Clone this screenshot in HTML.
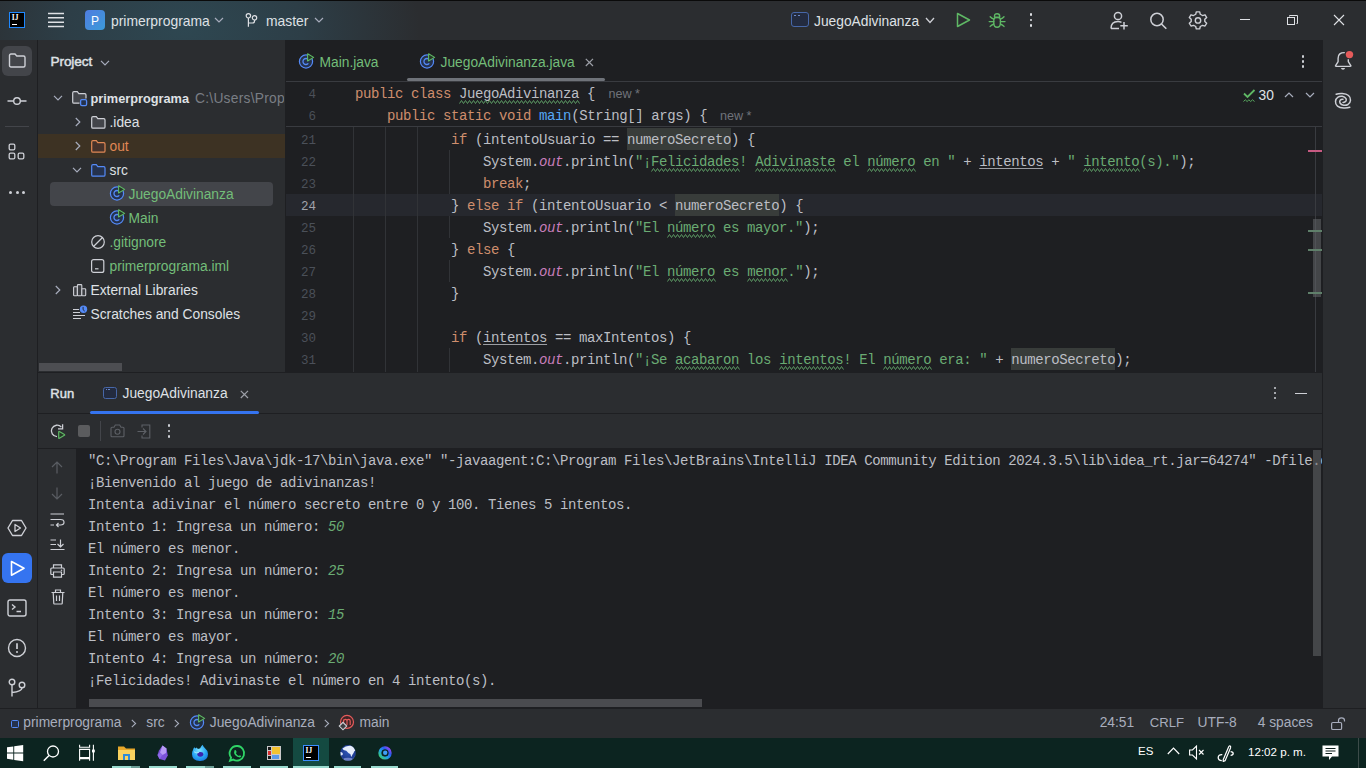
<!DOCTYPE html>
<html><head><meta charset="utf-8">
<style>
*{box-sizing:border-box}
html,body{margin:0;padding:0}
body{width:1366px;height:768px;overflow:hidden;position:relative;background:#2B2D30;font-family:"Liberation Sans",sans-serif;color:#DFE1E5;font-size:14px}
.a{position:absolute}
.t{position:absolute;white-space:pre;line-height:1}
.mono{font-family:"Liberation Mono",monospace}
svg{position:absolute;overflow:visible}
#title{left:0;top:0;width:1366px;height:40px;background:#2B2D30;border-top:1px solid #0a0a0a}
#grad{left:0;top:1px;width:700px;height:39px;background:radial-gradient(ellipse 235px 150px at 185px 28px,#2E4751 0%,#2D3E47 50%,#2B2D30 100%)}
#stripeL{left:0;top:40px;width:38px;height:668px;background:#2B2D30;border-right:1px solid #1E1F22}
#proj{left:38px;top:40px;width:247px;height:332px;background:#2B2D30}
#editor{left:285px;top:40px;width:1038px;height:332px;background:#1E1F22;border-left:1px solid #1E1F22}
#stripeR{left:1322px;top:40px;width:44px;height:668px;background:#2B2D30;border-left:1px solid #1E1F22}
#run{left:38px;top:372px;width:1284px;height:336px;background:#2B2D30;border-top:1px solid #1E1F22}
#status{left:0;top:708px;width:1366px;height:30px;background:#2B2D30;border-top:1px solid #1E1F22}
#taskbar{left:0;top:738px;width:1366px;height:30px;background:#0C2420}

.code{position:absolute;left:355px;height:22px;line-height:22px;padding-top:0.5px;font-family:"Liberation Mono",monospace;font-size:14px;letter-spacing:-0.4px;color:#BCBEC4;white-space:pre}
.ln{position:absolute;left:287px;width:29px;text-align:right;height:22px;line-height:22px;padding-top:1.5px;font-family:"Liberation Mono",monospace;font-size:12.5px;color:#4B5059;white-space:pre}
.ln.cur{color:#A1A3AB}
.k{color:#CF8E6D}.s{color:#6AAB73}.fn{color:#56A8F5}.st{color:#C77DBB;font-style:italic}
.sty{color:#6AAB73}
.ty{}
.ul{text-decoration:underline #9C9EA3;text-underline-offset:2px}
.hl{}
.inp{color:#6AAB73;font-style:italic}
</style></head><body>
<div class="a" id="title"></div>
<div class="a" id="grad"></div>

<!-- TITLE BAR CONTENT -->
<div class="a" style="left:9px;top:12px;width:16px;height:16px;background:#000;border:1px solid #1E88FF"></div>
<div class="t" style="left:11.8px;top:14.3px;font-size:7.5px;font-weight:bold;color:#fff;font-family:'Liberation Serif'">IJ</div>
<div class="a" style="left:12px;top:24px;width:5px;height:1px;background:#fff"></div>
<svg style="left:48px;top:12px" width="16" height="16"><path d="M0 1.5 H16 M0 5.8 H16 M0 10.2 H16 M0 14.6 H16" stroke="#DFE1E5" stroke-width="1.5"/></svg>
<div class="a" style="left:85px;top:10px;width:20px;height:20px;border-radius:4px;background:linear-gradient(135deg,#4F7CE0,#3B9BD9)"></div>
<div class="t" style="left:91px;top:15.2px;font-size:12px;color:#fff">P</div>
<div class="t" style="left:111px;top:14.5px;font-size:13.9px;color:#DFE1E5">primerprograma</div>
<svg style="left:214px;top:17px" width="10" height="6"><path d="M1 1 L5 5 L9 1" fill="none" stroke="#A8ADBD" stroke-width="1.2"/></svg>
<svg style="left:244px;top:11px" width="16" height="17"><circle cx="4.4" cy="4.8" r="2.2" fill="none" stroke="#DFE1E5" stroke-width="1.2"/><circle cx="10.5" cy="6.8" r="2.2" fill="none" stroke="#DFE1E5" stroke-width="1.2"/><path d="M4.4 7 V15.8 M10.5 9 V10 Q10.5 12 8.5 12 H4.4" fill="none" stroke="#DFE1E5" stroke-width="1.2"/></svg>
<div class="t" style="left:266px;top:14.5px;font-size:13.9px;color:#DFE1E5">master</div>
<svg style="left:314px;top:17px" width="10" height="6"><path d="M1 1 L5 5 L9 1" fill="none" stroke="#A8ADBD" stroke-width="1.2"/></svg>

<div class="a" style="left:791px;top:12px;width:18px;height:15px;border:1.3px solid #4767A8;border-radius:3px;background:#232B3F"></div>
<div class="a" style="left:794px;top:15px;width:2px;height:1.3px;background:#6A88C8"></div>
<div class="a" style="left:797.5px;top:15px;width:2px;height:1.3px;background:#6A88C8"></div>
<div class="t" style="left:814px;top:14.5px;font-size:13.8px;color:#DFE1E5">JuegoAdivinanza</div>
<svg style="left:925px;top:17px" width="10" height="7"><path d="M1 1 L5 5.5 L9 1" fill="none" stroke="#CED0D6" stroke-width="1.3"/></svg>
<svg style="left:955px;top:12px" width="16" height="16"><path d="M2.5 1.5 L14.5 8 L2.5 14.5 Z" fill="none" stroke="#5FB865" stroke-width="1.5" stroke-linejoin="round"/></svg>
<svg style="left:988px;top:12.6px" width="19" height="16"><path d="M6.5 4.3 V3.2 Q6.5 0.7 9.1 0.7 Q11.7 0.7 11.7 3.2 V4.3 Z" fill="none" stroke="#5FB865" stroke-width="1.4" stroke-linejoin="round"/><path d="M5.8 6.6 Q5.8 4.6 9.1 4.6 Q12.4 4.6 12.4 6.6 V10.2 Q12.4 14.2 9.1 14.2 Q5.8 14.2 5.8 10.2 Z" fill="none" stroke="#5FB865" stroke-width="1.35"/><path d="M2.2 3.8 Q3.5 5.3 5.8 6.2 M1.2 8.6 H5.8 M2.2 13.4 Q3.5 11.9 5.8 11 M16 3.8 Q14.7 5.3 12.4 6.2 M17 8.6 H12.4 M16 13.4 Q14.7 11.9 12.4 11" fill="none" stroke="#5FB865" stroke-width="1.4" stroke-linecap="round"/></svg>
<div class="a" style="left:1029.7px;top:13.3px;width:2.6px;height:2.6px;border-radius:50%;background:#DFE1E5"></div>
<div class="a" style="left:1029.7px;top:18.7px;width:2.6px;height:2.6px;border-radius:50%;background:#DFE1E5"></div>
<div class="a" style="left:1029.7px;top:24.2px;width:2.6px;height:2.6px;border-radius:50%;background:#DFE1E5"></div>

<svg style="left:1110px;top:11px" width="20" height="19"><circle cx="8" cy="5" r="3.6" fill="none" stroke="#CED0D6" stroke-width="1.5"/><path d="M1 17.5 Q1 10.5 8 10.5 Q10 10.5 11.5 11.3 M1 17.5 H9" fill="none" stroke="#CED0D6" stroke-width="1.5"/><path d="M14 11 V18.5 M10.3 14.7 H17.8" fill="none" stroke="#CED0D6" stroke-width="1.5"/></svg>
<svg style="left:1149px;top:12px" width="19" height="18"><circle cx="8" cy="7.5" r="6.2" fill="none" stroke="#CED0D6" stroke-width="1.5"/><path d="M12.5 12 L17.3 16.8" fill="none" stroke="#CED0D6" stroke-width="1.6"/></svg>
<svg style="left:1189px;top:11px" width="18" height="18"><path d="M7.3 1 H10.7 L11.3 3.5 L13.5 4.8 L16 4 L17.7 7 L15.8 8.8 V11.2 L17.7 13 L16 16 L13.5 15.2 L11.3 16.5 L10.7 19 H7.3 L6.7 16.5 L4.5 15.2 L2 16 L0.3 13 L2.2 11.2 V8.8 L0.3 7 L2 4 L4.5 4.8 L6.7 3.5 Z" transform="scale(1 0.94)" fill="none" stroke="#CED0D6" stroke-width="1.4" stroke-linejoin="round"/><circle cx="9" cy="9.4" r="2.7" fill="none" stroke="#CED0D6" stroke-width="1.4"/></svg>
<div class="a" style="left:1240px;top:19px;width:10px;height:1px;background:#DFE1E5"></div>
<div class="a" style="left:1287px;top:17px;width:8px;height:8px;border:1px solid #DFE1E5"></div>
<svg style="left:1289px;top:15px" width="9" height="9"><path d="M0.5 1.5 V0.5 H8.5 V8.5 H7.5" fill="none" stroke="#DFE1E5" stroke-width="1"/></svg>
<svg style="left:1333px;top:14px" width="12" height="12"><path d="M1 1 L11 11 M11 1 L1 11" stroke="#DFE1E5" stroke-width="1.1"/></svg>

<div class="a" id="stripeL"></div>
<div class="a" id="proj"></div>


<!-- PROJECT PANEL -->
<div class="t" style="left:50.5px;top:54.6px;font-size:13.6px;color:#DFE1E5;-webkit-text-stroke:0.45px #DFE1E5;letter-spacing:-0.1px">Project</div>
<svg style="left:99.8px;top:59.5px" width="10" height="6"><path d="M1 0.8 L5 4.8 L9 0.8" fill="none" stroke="#A8ADBD" stroke-width="1.2"/></svg>
<div class="a" style="left:38px;top:134px;width:247px;height:24px;background:#3D3223"></div>
<div class="a" style="left:50px;top:182px;width:223px;height:24px;border-radius:4px;background:#43454A"></div>
<svg style="left:53px;top:95px" width="10" height="6"><path d="M1 0.8 L5 4.8 L9 0.8" fill="none" stroke="#A8ADBD" stroke-width="1.2"/></svg><svg style="left:72px;top:91px" width="16" height="16"><path d="M0.7 2 Q0.7 0.7 2 0.7 H5.3 L6.8 2.6 H12.7 Q14 2.6 14 3.9 V10.9 Q14 12.2 12.7 12.2 H2 Q0.7 12.2 0.7 10.9 Z" fill="#43454A" stroke="none"/><path d="M7.5 12.2 H2 Q0.7 12.2 0.7 10.9 V2 Q0.7 0.7 2 0.7 H5.3 L6.8 2.6 H12.7 Q14 2.6 14 3.9 V7.5" fill="none" stroke="#CED0D6" stroke-width="1.2"/><rect x="8.6" y="8.6" width="6" height="6" rx="1.3" fill="#25324D" stroke="#548AF7" stroke-width="1.3"/></svg><div class="t" style="left:90.5px;top:92.7px;font-size:12.75px;color:#DFE1E5;font-weight:bold">primerprograma</div><div class="t" style="left:195px;top:92.2px;font-size:13.8px;color:#7A7E85;width:89px;overflow:hidden;letter-spacing:0.25px">C:\Users\Propietario</div><svg style="left:75px;top:117px" width="6" height="10"><path d="M0.8 1 L4.8 5 L0.8 9" fill="none" stroke="#A8ADBD" stroke-width="1.2"/></svg><svg style="left:91px;top:116px" width="15" height="13"><path d="M0.7 2 Q0.7 0.7 2 0.7 H5.3 L6.8 2.6 H12.7 Q14 2.6 14 3.9 V10.9 Q14 12.2 12.7 12.2 H2 Q0.7 12.2 0.7 10.9 Z" fill="#43454A" stroke="#CED0D6" stroke-width="1.2"/></svg><div class="t" style="left:109.5px;top:116.2px;font-size:13.8px;color:#DFE1E5;">.idea</div><svg style="left:75px;top:141px" width="6" height="10"><path d="M0.8 1 L4.8 5 L0.8 9" fill="none" stroke="#A8ADBD" stroke-width="1.2"/></svg><svg style="left:91px;top:140px" width="15" height="13"><path d="M0.7 2 Q0.7 0.7 2 0.7 H5.3 L6.8 2.6 H12.7 Q14 2.6 14 3.9 V10.9 Q14 12.2 12.7 12.2 H2 Q0.7 12.2 0.7 10.9 Z" fill="#45322B" stroke="#E08855" stroke-width="1.2"/></svg><div class="t" style="left:109.5px;top:140.2px;font-size:13.8px;color:#E08855;">out</div><svg style="left:72px;top:167px" width="10" height="6"><path d="M1 0.8 L5 4.8 L9 0.8" fill="none" stroke="#A8ADBD" stroke-width="1.2"/></svg><svg style="left:91px;top:164px" width="15" height="13"><path d="M0.7 2 Q0.7 0.7 2 0.7 H5.3 L6.8 2.6 H12.7 Q14 2.6 14 3.9 V10.9 Q14 12.2 12.7 12.2 H2 Q0.7 12.2 0.7 10.9 Z" fill="#25324D" stroke="#548AF7" stroke-width="1.2"/></svg><div class="t" style="left:109.5px;top:164.2px;font-size:13.8px;color:#DFE1E5;">src</div><svg style="left:110px;top:185px" width="16" height="16"><circle cx="7" cy="8.5" r="6.6" fill="#25324D" stroke="#548AF7" stroke-width="1.2"/><path d="M9.3 6.6 A3 3 0 1 0 9.3 10.4" fill="none" stroke="#548AF7" stroke-width="1.3"/><path d="M8.6 0.8 L14.6 4.4 L8.6 8 Z" fill="#253627" stroke="#5FB865" stroke-width="1.1" stroke-linejoin="round"/></svg><div class="t" style="left:128.5px;top:188.2px;font-size:13.8px;color:#73BD79;">JuegoAdivinanza</div><svg style="left:110px;top:209px" width="16" height="16"><circle cx="7" cy="8.5" r="6.6" fill="#25324D" stroke="#548AF7" stroke-width="1.2"/><path d="M9.3 6.6 A3 3 0 1 0 9.3 10.4" fill="none" stroke="#548AF7" stroke-width="1.3"/><path d="M8.6 0.8 L14.6 4.4 L8.6 8 Z" fill="#253627" stroke="#5FB865" stroke-width="1.1" stroke-linejoin="round"/></svg><div class="t" style="left:128.5px;top:212.2px;font-size:13.8px;color:#73BD79;">Main</div><svg style="left:91px;top:235px" width="15" height="15"><circle cx="7" cy="7" r="6.3" fill="none" stroke="#CED0D6" stroke-width="1.2"/><path d="M2.5 11.5 L11.5 2.5" stroke="#CED0D6" stroke-width="1.2"/></svg><div class="t" style="left:109.5px;top:236.2px;font-size:13.8px;color:#73BD79;">.gitignore</div><svg style="left:91px;top:259px" width="14" height="14"><rect x="0.6" y="0.6" width="12.2" height="12.8" rx="2" fill="none" stroke="#CED0D6" stroke-width="1.2"/><path d="M4 9.8 H7.5" stroke="#CED0D6" stroke-width="1.2"/></svg><div class="t" style="left:109.5px;top:260.2px;font-size:13.8px;color:#73BD79;">primerprograma.iml</div><svg style="left:55px;top:285px" width="6" height="10"><path d="M0.8 1 L4.8 5 L0.8 9" fill="none" stroke="#A8ADBD" stroke-width="1.2"/></svg><svg style="left:73px;top:284px" width="14" height="13"><rect x="0.6" y="2.7" width="3.8" height="9" rx="0.8" fill="#3C3E42" stroke="#CED0D6" stroke-width="1.1"/><rect x="4.4" y="0.6" width="4.4" height="11.1" rx="0.8" fill="#3C3E42" stroke="#CED0D6" stroke-width="1.1"/><rect x="8.8" y="4.7" width="3.9" height="7" rx="0.8" fill="#3C3E42" stroke="#CED0D6" stroke-width="1.1"/></svg><div class="t" style="left:90.5px;top:284.2px;font-size:13.8px;color:#DFE1E5;">External Libraries</div><svg style="left:72px;top:304px" width="16" height="16"><path d="M1 5.5 H7 M1 8.5 H8 M1 11.5 H13 M1 14.5 H9" stroke="#CED0D6" stroke-width="1.1"/><circle cx="11.5" cy="5.2" r="3.7" fill="#548AF7"/><path d="M11.1 2.9 V5.7 L12.7 7.1" fill="none" stroke="#1E1F22" stroke-width="0.9"/></svg><div class="t" style="left:90.5px;top:308.2px;font-size:13.8px;color:#DFE1E5;">Scratches and Consoles</div><div class="a" style="left:39px;top:363px;width:83px;height:8px;background:#4D4E52"></div>
<!-- LEFT STRIPE -->
<div class="a" style="left:2px;top:46px;width:30px;height:30px;border-radius:6px;background:#43454A"></div>
<svg style="left:8px;top:53px" width="18" height="15"><path d="M1.5 2.5 Q1.5 1 3 1 H7 L8.8 3 H15.5 Q17 3 17 4.5 V12.5 Q17 14 15.5 14 H3 Q1.5 14 1.5 12.5 Z" fill="none" stroke="#CED0D6" stroke-width="1.4"/></svg>
<svg style="left:7px;top:96px" width="20" height="10"><circle cx="10" cy="5" r="3.3" fill="none" stroke="#CED0D6" stroke-width="1.4"/><path d="M0.5 5 H6.7 M13.3 5 H19.5" stroke="#CED0D6" stroke-width="1.4"/></svg>
<div class="a" style="left:5px;top:126px;width:24px;height:1px;background:#43454A"></div>
<svg style="left:8px;top:143px" width="18" height="18"><rect x="1.2" y="1.2" width="5.6" height="5.6" rx="1.3" fill="none" stroke="#CED0D6" stroke-width="1.3"/><rect x="1.2" y="10.2" width="5.6" height="5.6" rx="1.3" fill="none" stroke="#CED0D6" stroke-width="1.3"/><rect x="10.2" y="10.2" width="5.6" height="5.6" rx="1.3" fill="none" stroke="#CED0D6" stroke-width="1.3"/></svg>
<div class="a" style="left:9px;top:190.5px;width:3px;height:3px;border-radius:50%;background:#CED0D6"></div>
<div class="a" style="left:15.5px;top:190.5px;width:3px;height:3px;border-radius:50%;background:#CED0D6"></div>
<div class="a" style="left:22px;top:190.5px;width:3px;height:3px;border-radius:50%;background:#CED0D6"></div>

<svg style="left:7px;top:519px" width="20" height="18"><path d="M5.5 1.5 H14.5 L19 9 L14.5 16.5 H5.5 L1 9 Z" fill="none" stroke="#CED0D6" stroke-width="1.4" stroke-linejoin="round"/><path d="M8 5.5 L13.5 9 L8 12.5 Z" fill="none" stroke="#CED0D6" stroke-width="1.3" stroke-linejoin="round"/></svg>
<div class="a" style="left:2px;top:553px;width:30px;height:30px;border-radius:6px;background:#3574F0"></div>
<svg style="left:10px;top:560px" width="16" height="17"><path d="M1.5 1.5 L14 8.3 L1.5 15.2 Z" fill="none" stroke="#FFFFFF" stroke-width="1.6" stroke-linejoin="round"/></svg>
<svg style="left:7px;top:599px" width="20" height="18"><rect x="1" y="1" width="18" height="16" rx="2" fill="none" stroke="#CED0D6" stroke-width="1.4"/><path d="M5 5.5 L8 8 L5 10.5 M9.5 12.5 H14" fill="none" stroke="#CED0D6" stroke-width="1.4"/></svg>
<svg style="left:7px;top:638px" width="20" height="20"><circle cx="10" cy="10" r="8.5" fill="none" stroke="#CED0D6" stroke-width="1.4"/><path d="M10 5.2 V11" stroke="#CED0D6" stroke-width="1.7"/><circle cx="10" cy="14" r="1" fill="#CED0D6"/></svg>
<svg style="left:8px;top:678px" width="18" height="19"><circle cx="4" cy="4" r="2.8" fill="none" stroke="#CED0D6" stroke-width="1.4"/><circle cx="14" cy="7" r="2.8" fill="none" stroke="#CED0D6" stroke-width="1.4"/><path d="M4 6.8 V18.5 M14 9.8 Q14 13.5 4 14.5" fill="none" stroke="#CED0D6" stroke-width="1.4"/></svg>

<div class="a" id="editor"></div>
<!-- EDITOR_START -->
<!-- EDITOR CONTENT -->
<div class="a" style="left:286px;top:81px;width:1036px;height:1px;background:#393B40"></div>
<svg style="left:299px;top:53px" width="16" height="16"><circle cx="7" cy="8.5" r="6.6" fill="#25324D" stroke="#548AF7" stroke-width="1.2"/><path d="M9.3 6.6 A3 3 0 1 0 9.3 10.4" fill="none" stroke="#548AF7" stroke-width="1.3"/><path d="M8.6 0.8 L14.6 4.4 L8.6 8 Z" fill="#253627" stroke="#5FB865" stroke-width="1.1" stroke-linejoin="round"/></svg>
<div class="t" style="left:319.5px;top:55.5px;font-size:13.8px;color:#73BD79">Main.java</div>
<svg style="left:420px;top:53px" width="16" height="16"><circle cx="7" cy="8.5" r="6.6" fill="#25324D" stroke="#548AF7" stroke-width="1.2"/><path d="M9.3 6.6 A3 3 0 1 0 9.3 10.4" fill="none" stroke="#548AF7" stroke-width="1.3"/><path d="M8.6 0.8 L14.6 4.4 L8.6 8 Z" fill="#253627" stroke="#5FB865" stroke-width="1.1" stroke-linejoin="round"/></svg>
<div class="t" style="left:440.5px;top:55.5px;font-size:13.8px;color:#73BD79">JuegoAdivinanza.java</div>
<svg style="left:585px;top:57.5px" width="9" height="9"><path d="M0.8 0.8 L8 8 M8 0.8 L0.8 8" stroke="#9DA0A8" stroke-width="1.2"/></svg>
<div class="a" style="left:407px;top:78px;width:198px;height:3px;border-radius:2px;background:#6F737A"></div>
<div class="a" style="left:1301.8px;top:55px;width:2.5px;height:2.5px;border-radius:40%;background:#CED0D6"></div>
<div class="a" style="left:1301.8px;top:60px;width:2.5px;height:2.5px;border-radius:40%;background:#CED0D6"></div>
<div class="a" style="left:1301.8px;top:65px;width:2.5px;height:2.5px;border-radius:40%;background:#CED0D6"></div>
<div class="a" style="left:286px;top:126px;width:1036px;height:1px;background:#393B40"></div>
<div class="a" style="left:286px;top:194px;width:1036px;height:22px;background:#26282E"></div>
<div class="a" style="left:353px;top:127px;width:1px;height:245px;background:#313337"></div>
<div class="a" style="left:385px;top:127px;width:1px;height:245px;background:#313337"></div>
<div class="a" style="left:417px;top:127px;width:1px;height:245px;background:#313337"></div>
<div class="a" style="left:449px;top:150px;width:1px;height:44px;background:#313337"></div>
<div class="a" style="left:449px;top:216px;width:1px;height:22px;background:#313337"></div>
<div class="a" style="left:449px;top:260px;width:1px;height:22px;background:#313337"></div>
<div class="a" style="left:449px;top:348px;width:1px;height:24px;background:#313337"></div>
<div class="a" style="left:627px;top:128px;width:104px;height:22px;background:#383C3A"></div>
<div class="a" style="left:675px;top:194px;width:104px;height:22px;background:#383C3A"></div>
<div class="a" style="left:1011px;top:348px;width:104px;height:22px;background:#383C3A"></div>
<div class="ln" style="top:82px">4</div>
<div class="code" style="top:82px"><span class="k">public</span> <span class="k">class</span> <span class="ty">JuegoAdivinanza</span> {</div>
<div class="ln" style="top:104px">6</div>
<div class="code" style="top:104px">    <span class="k">public</span> <span class="k">static</span> <span class="k">void</span> <span class="fn">main</span>(String[] args) {</div>
<div class="t" style="left:608.5px;top:88px;font-size:12.6px;color:#6F737A">new *</div>
<div class="t" style="left:720px;top:110px;font-size:12.6px;color:#6F737A">new *</div>
<div class="ln" style="top:128px">21</div>
<div class="code" style="top:128px">            <span class="k">if</span> (intentoUsuario == <span class="hl">numeroSecreto</span>) {</div>
<div class="ln" style="top:150px">22</div>
<div class="code" style="top:150px">                System.<span class="st">out</span>.println(<span class="s">&quot;¡</span><span class="sty">Felicidades</span><span class="s">! </span><span class="sty">Adivinaste</span><span class="s"> el </span><span class="sty">número</span><span class="s"> en &quot;</span> + <span class="ul">intentos</span> + <span class="s">&quot; </span><span class="sty">intento</span><span class="s">(s).&quot;</span>);</div>
<div class="ln" style="top:172px">23</div>
<div class="code" style="top:172px">                <span class="k">break</span>;</div>
<div class="ln cur" style="top:194px">24</div>
<div class="code" style="top:194px">            } <span class="k">else</span> <span class="k">if</span> (intentoUsuario &lt; <span class="hl">numeroSecreto</span>) {</div>
<div class="ln" style="top:216px">25</div>
<div class="code" style="top:216px">                System.<span class="st">out</span>.println(<span class="s">&quot;El </span><span class="sty">número</span><span class="s"> es mayor.&quot;</span>);</div>
<div class="ln" style="top:238px">26</div>
<div class="code" style="top:238px">            } <span class="k">else</span> {</div>
<div class="ln" style="top:260px">27</div>
<div class="code" style="top:260px">                System.<span class="st">out</span>.println(<span class="s">&quot;El </span><span class="sty">número</span><span class="s"> es </span><span class="sty">menor</span><span class="s">.&quot;</span>);</div>
<div class="ln" style="top:282px">28</div>
<div class="code" style="top:282px">            }</div>
<div class="ln" style="top:304px">29</div>
<div class="code" style="top:304px"></div>
<div class="ln" style="top:326px">30</div>
<div class="code" style="top:326px">            <span class="k">if</span> (<span class="ul">intentos</span> == maxIntentos) {</div>
<div class="ln" style="top:348px">31</div>
<div class="code" style="top:348px">                System.<span class="st">out</span>.println(<span class="s">&quot;¡Se </span><span class="sty">acabaron</span><span class="s"> los </span><span class="sty">intentos</span><span class="s">! El </span><span class="sty">número</span><span class="s"> era: &quot;</span> + <span class="hl">numeroSecreto</span>);</div>
<svg style="left:1243px;top:89px" width="13" height="14"><path d="M1 4.5 L4.5 8 L11.5 1" fill="none" stroke="#5FB865" stroke-width="1.8"/><path d="M0.5 12.5 L2.3 10.8 L4.1 12.5 L5.9 10.8 L7.7 12.5 L9.5 10.8 L11.5 12.5" fill="none" stroke="#5FB865" stroke-width="0.9"/></svg>
<div class="t" style="left:1258.5px;top:88.5px;font-size:13.8px;color:#DFE1E5">30</div>
<svg style="left:1284px;top:92px" width="10" height="6"><path d="M1 5 L5 1 L9 5" fill="none" stroke="#A8ADBD" stroke-width="1.2"/></svg>
<svg style="left:1305px;top:92px" width="10" height="6"><path d="M1 1 L5 5 L9 1" fill="none" stroke="#A8ADBD" stroke-width="1.2"/></svg>
<div class="a" style="left:1315px;top:127px;width:1px;height:245px;background:#393B40"></div>
<div class="a" style="left:1313px;top:219px;width:8px;height:78px;background:rgba(100,102,106,0.55)"></div>
<div class="a" style="left:1308px;top:150px;width:14px;height:2px;background:#C75A82"></div>
<div class="a" style="left:1308px;top:230px;width:14px;height:2px;background:#5F7F6A"></div>
<div class="a" style="left:1308px;top:249px;width:14px;height:2px;background:#5F7F6A"></div>
<div class="a" style="left:1308px;top:292px;width:14px;height:2px;background:#5F7F6A"></div>
<svg style="left:459px;top:100px" width="121" height="4"><polyline points="0,3 2,0 4,3 6,0 8,3 10,0 12,3 14,0 16,3 18,0 20,3 22,0 24,3 26,0 28,3 30,0 32,3 34,0 36,3 38,0 40,3 42,0 44,3 46,0 48,3 50,0 52,3 54,0 56,3 58,0 60,3 62,0 64,3 66,0 68,3 70,0 72,3 74,0 76,3 78,0 80,3 82,0 84,3 86,0 88,3 90,0 92,3 94,0 96,3 98,0 100,3 102,0 104,3 106,0 108,3 110,0 112,3 114,0 116,3 118,0 120,3" transform="translate(0.5,0.5)" fill="none" stroke="#5C9863" stroke-width="1"/></svg>
<svg style="left:651px;top:168px" width="89" height="4"><polyline points="0,3 2,0 4,3 6,0 8,3 10,0 12,3 14,0 16,3 18,0 20,3 22,0 24,3 26,0 28,3 30,0 32,3 34,0 36,3 38,0 40,3 42,0 44,3 46,0 48,3 50,0 52,3 54,0 56,3 58,0 60,3 62,0 64,3 66,0 68,3 70,0 72,3 74,0 76,3 78,0 80,3 82,0 84,3 86,0 88,3" transform="translate(0.5,0.5)" fill="none" stroke="#5C9863" stroke-width="1"/></svg>
<svg style="left:755px;top:168px" width="81" height="4"><polyline points="0,3 2,0 4,3 6,0 8,3 10,0 12,3 14,0 16,3 18,0 20,3 22,0 24,3 26,0 28,3 30,0 32,3 34,0 36,3 38,0 40,3 42,0 44,3 46,0 48,3 50,0 52,3 54,0 56,3 58,0 60,3 62,0 64,3 66,0 68,3 70,0 72,3 74,0 76,3 78,0 80,3" transform="translate(0.5,0.5)" fill="none" stroke="#5C9863" stroke-width="1"/></svg>
<svg style="left:867px;top:168px" width="49" height="4"><polyline points="0,3 2,0 4,3 6,0 8,3 10,0 12,3 14,0 16,3 18,0 20,3 22,0 24,3 26,0 28,3 30,0 32,3 34,0 36,3 38,0 40,3 42,0 44,3 46,0 48,3" transform="translate(0.5,0.5)" fill="none" stroke="#5C9863" stroke-width="1"/></svg>
<svg style="left:1083px;top:168px" width="57" height="4"><polyline points="0,3 2,0 4,3 6,0 8,3 10,0 12,3 14,0 16,3 18,0 20,3 22,0 24,3 26,0 28,3 30,0 32,3 34,0 36,3 38,0 40,3 42,0 44,3 46,0 48,3 50,0 52,3 54,0 56,3" transform="translate(0.5,0.5)" fill="none" stroke="#5C9863" stroke-width="1"/></svg>
<svg style="left:667px;top:234px" width="49" height="4"><polyline points="0,3 2,0 4,3 6,0 8,3 10,0 12,3 14,0 16,3 18,0 20,3 22,0 24,3 26,0 28,3 30,0 32,3 34,0 36,3 38,0 40,3 42,0 44,3 46,0 48,3" transform="translate(0.5,0.5)" fill="none" stroke="#5C9863" stroke-width="1"/></svg>
<svg style="left:667px;top:278px" width="49" height="4"><polyline points="0,3 2,0 4,3 6,0 8,3 10,0 12,3 14,0 16,3 18,0 20,3 22,0 24,3 26,0 28,3 30,0 32,3 34,0 36,3 38,0 40,3 42,0 44,3 46,0 48,3" transform="translate(0.5,0.5)" fill="none" stroke="#5C9863" stroke-width="1"/></svg>
<svg style="left:747px;top:278px" width="41" height="4"><polyline points="0,3 2,0 4,3 6,0 8,3 10,0 12,3 14,0 16,3 18,0 20,3 22,0 24,3 26,0 28,3 30,0 32,3 34,0 36,3 38,0 40,3" transform="translate(0.5,0.5)" fill="none" stroke="#5C9863" stroke-width="1"/></svg>
<svg style="left:675px;top:366px" width="65" height="4"><polyline points="0,3 2,0 4,3 6,0 8,3 10,0 12,3 14,0 16,3 18,0 20,3 22,0 24,3 26,0 28,3 30,0 32,3 34,0 36,3 38,0 40,3 42,0 44,3 46,0 48,3 50,0 52,3 54,0 56,3 58,0 60,3 62,0 64,3" transform="translate(0.5,0.5)" fill="none" stroke="#5C9863" stroke-width="1"/></svg>
<svg style="left:779px;top:366px" width="65" height="4"><polyline points="0,3 2,0 4,3 6,0 8,3 10,0 12,3 14,0 16,3 18,0 20,3 22,0 24,3 26,0 28,3 30,0 32,3 34,0 36,3 38,0 40,3 42,0 44,3 46,0 48,3 50,0 52,3 54,0 56,3 58,0 60,3 62,0 64,3" transform="translate(0.5,0.5)" fill="none" stroke="#5C9863" stroke-width="1"/></svg>
<svg style="left:883px;top:366px" width="49" height="4"><polyline points="0,3 2,0 4,3 6,0 8,3 10,0 12,3 14,0 16,3 18,0 20,3 22,0 24,3 26,0 28,3 30,0 32,3 34,0 36,3 38,0 40,3 42,0 44,3 46,0 48,3" transform="translate(0.5,0.5)" fill="none" stroke="#5C9863" stroke-width="1"/></svg>
<!-- EDITOR_END -->
<div class="a" id="stripeR"></div>
<div class="a" id="run"></div>
<!-- RUN_START -->
<!-- RUN PANEL -->
<div class="t" style="left:50.3px;top:387.4px;font-size:13px;color:#DFE1E5;-webkit-text-stroke:0.45px #DFE1E5">Run</div>
<div class="a" style="left:103px;top:387px;width:14px;height:12px;border:1.2px solid #4767A8;border-radius:2.5px;background:#232B3F"></div>
<div class="a" style="left:105.5px;top:389.3px;width:1.6px;height:1px;background:#6A88C8"></div><div class="a" style="left:108.3px;top:389.3px;width:1.6px;height:1px;background:#6A88C8"></div>
<div class="t" style="left:122.5px;top:386.8px;font-size:13.8px;color:#DFE1E5">JuegoAdivinanza</div>
<svg style="left:240px;top:390px" width="9" height="9"><path d="M0.8 0.8 L8 8 M8 0.8 L0.8 8" stroke="#9DA0A8" stroke-width="1.2"/></svg>
<div class="a" style="left:38px;top:413px;width:1284px;height:1px;background:#1E1F22"></div>
<div class="a" style="left:90px;top:411px;width:169px;height:3px;border-radius:2px;background:#3574F0"></div>
<div class="a" style="left:1273.5px;top:386.75px;width:2.5px;height:2.5px;border-radius:50%;background:#CED0D6"></div>
<div class="a" style="left:1273.5px;top:391.75px;width:2.5px;height:2.5px;border-radius:50%;background:#CED0D6"></div>
<div class="a" style="left:1273.5px;top:396.75px;width:2.5px;height:2.5px;border-radius:50%;background:#CED0D6"></div>
<div class="a" style="left:1295px;top:392.5px;width:12px;height:1.3px;background:#CED0D6"></div>
<svg style="left:50px;top:423px" width="17" height="17"><path d="M7 13.6 A5.7 5.7 0 1 1 11.4 4.2" fill="none" stroke="#CED0D6" stroke-width="1.3"/><path d="M12.6 1.2 V5.8 H8" fill="none" stroke="#CED0D6" stroke-width="1.3"/><path d="M8.7 8.9 Q8.7 8.2 9.4 8.6 L14.4 11.5 Q15 11.9 14.4 12.3 L9.4 15.2 Q8.7 15.6 8.7 14.9 Z" fill="#253627" stroke="#5FB865" stroke-width="1.2" stroke-linejoin="round"/></svg>
<div class="a" style="left:78px;top:425px;width:12px;height:12px;border-radius:2px;background:#5B5C5E"></div>
<div class="a" style="left:100px;top:421px;width:1px;height:20px;background:#43454A"></div>
<svg style="left:110px;top:424px" width="15" height="14"><path d="M1 4.3 Q1 3.3 2 3.3 H4 L5.3 1 H9.7 L11 3.3 H13 Q14 3.3 14 4.3 V11.8 Q14 12.8 13 12.8 H2 Q1 12.8 1 11.8 Z" fill="none" stroke="#5D6066" stroke-width="1.1"/><circle cx="7.5" cy="7.8" r="2.5" fill="none" stroke="#5D6066" stroke-width="1.1"/></svg>
<svg style="left:137px;top:424px" width="14" height="15"><path d="M5 3.5 V1 H12.8 V14 H5 V11.5" fill="none" stroke="#5D6066" stroke-width="1.1"/><path d="M0.5 7.5 H9 M6 4.5 L9 7.5 L6 10.5" fill="none" stroke="#5D6066" stroke-width="1.1"/></svg>
<div class="a" style="left:167.7px;top:424.35px;width:2.5px;height:2.5px;border-radius:50%;background:#CED0D6"></div>
<div class="a" style="left:167.7px;top:429.95px;width:2.5px;height:2.5px;border-radius:50%;background:#CED0D6"></div>
<div class="a" style="left:167.7px;top:435.25px;width:2.5px;height:2.5px;border-radius:50%;background:#CED0D6"></div>
<div class="a" style="left:38px;top:448px;width:1284px;height:1px;background:#1E1F22"></div>
<div class="a" style="left:76px;top:449px;width:1246px;height:259px;background:#1E1F22"></div>
<svg style="left:50px;top:461px" width="14" height="13"><path d="M7 12.5 V1 M2 6 L7 1 L12 6" fill="none" stroke="#5A5D63" stroke-width="1.2"/></svg>
<svg style="left:50px;top:487px" width="14" height="13"><path d="M7 0.5 V12 M2 7 L7 12 L12 7" fill="none" stroke="#5A5D63" stroke-width="1.2"/></svg>
<svg style="left:50px;top:513px" width="15" height="14"><path d="M0.5 1 H14 M0.5 6.5 H10.5 Q14 6.5 14 9.3 Q14 12 10.5 12 H6.5 M8.5 10 L6.5 12 L8.5 14 M0.5 12 H4" fill="none" stroke="#CED0D6" stroke-width="1.2"/></svg>
<svg style="left:50px;top:539px" width="15" height="12"><path d="M0.5 1 H6 M0.5 5.5 H6 M0.5 10.5 H14.5 M10.5 0.5 V8 M7.5 5 L10.5 8 L13.5 5" fill="none" stroke="#CED0D6" stroke-width="1.2"/></svg>
<svg style="left:50px;top:564px" width="15" height="14"><path d="M3.5 4 V0.8 H11.5 V4 M3.5 10.5 H1.8 Q0.8 10.5 0.8 9.5 V5 Q0.8 4 1.8 4 H13.2 Q14.2 4 14.2 5 V9.5 Q14.2 10.5 13.2 10.5 H11.5 M3.5 8 H11.5 V13.2 H3.5 Z" fill="none" stroke="#CED0D6" stroke-width="1.2"/><circle cx="11.5" cy="6.2" r="0.8" fill="#CED0D6"/></svg>
<svg style="left:51px;top:589px" width="14" height="16"><path d="M0.5 3.5 H13.5 M4.5 3.5 V1 H9.5 V3.5 M2.2 3.5 L2.8 14.5 Q2.8 15 3.4 15 H10.6 Q11.2 15 11.2 14.5 L11.8 3.5 M5.5 6.5 V12 M8.5 6.5 V12" fill="none" stroke="#CED0D6" stroke-width="1.2"/></svg>
<div class="a" style="left:76px;top:449px;width:1246px;height:250px;overflow:hidden">
<div class="code" style="left:12px;top:0px">&quot;C:\Program Files\Java\jdk-17\bin\java.exe&quot; &quot;-javaagent:C:\Program Files\JetBrains\IntelliJ IDEA Community Edition 2024.3.5\lib\idea_rt.jar=64274&quot; -Dfile.encoding=UTF-8</div>
<div class="code" style="left:12px;top:22px">¡Bienvenido al juego de adivinanzas!</div>
<div class="code" style="left:12px;top:44px">Intenta adivinar el número secreto entre 0 y 100. Tienes 5 intentos.</div>
<div class="code" style="left:12px;top:66px">Intento 1: Ingresa un número: <span class="inp">50</span></div>
<div class="code" style="left:12px;top:88px">El número es menor.</div>
<div class="code" style="left:12px;top:110px">Intento 2: Ingresa un número: <span class="inp">25</span></div>
<div class="code" style="left:12px;top:132px">El número es menor.</div>
<div class="code" style="left:12px;top:154px">Intento 3: Ingresa un número: <span class="inp">15</span></div>
<div class="code" style="left:12px;top:176px">El número es mayor.</div>
<div class="code" style="left:12px;top:198px">Intento 4: Ingresa un número: <span class="inp">20</span></div>
<div class="code" style="left:12px;top:220px">¡Felicidades! Adivinaste el número en 4 intento(s).</div>
</div>
<div class="a" style="left:1313px;top:450px;width:8px;height:206px;background:rgba(100,102,106,0.55)"></div>
<div class="a" style="left:89px;top:699px;width:613px;height:8px;background:#4A4B4F"></div>
<!-- RUN_END -->
<div class="a" id="status"></div>
<div class="a" id="taskbar"></div>
<!-- BOTTOM_START -->
<!-- STATUS BAR -->
<div class="a" style="left:11px;top:719.5px;width:8px;height:8px;border:1.2px solid #548AF7;border-radius:1.5px;background:#25324D"></div>
<div class="t" style="left:23.3px;top:716.1px;font-size:13.8px;color:#A8ADBD">primerprograma</div>
<svg style="left:131px;top:719.0px" width="6" height="9"><path d="M0.8 0.8 L4.6 4.5 L0.8 8.2" fill="none" stroke="#A8ADBD" stroke-width="1.1"/></svg>
<div class="t" style="left:146.3px;top:716.1px;font-size:13.8px;color:#A8ADBD">src</div>
<svg style="left:174px;top:719.0px" width="6" height="9"><path d="M0.8 0.8 L4.6 4.5 L0.8 8.2" fill="none" stroke="#A8ADBD" stroke-width="1.1"/></svg>
<svg style="left:190px;top:714.0px" width="16" height="16"><circle cx="7" cy="8.5" r="6.6" fill="#25324D" stroke="#548AF7" stroke-width="1.2"/><path d="M9.3 6.6 A3 3 0 1 0 9.3 10.4" fill="none" stroke="#548AF7" stroke-width="1.3"/><path d="M8.6 0.8 L14.6 4.4 L8.6 8 Z" fill="#253627" stroke="#5FB865" stroke-width="1.1" stroke-linejoin="round"/></svg>
<div class="t" style="left:209.8px;top:716.1px;font-size:13.8px;color:#A8ADBD">JuegoAdivinanza</div>
<svg style="left:324px;top:719.0px" width="6" height="9"><path d="M0.8 0.8 L4.6 4.5 L0.8 8.2" fill="none" stroke="#A8ADBD" stroke-width="1.1"/></svg>
<svg style="left:338px;top:714px" width="18" height="18"><circle cx="9" cy="7.9" r="6.5" fill="#3F2426" stroke="#E55B5B" stroke-width="1.2"/><path d="M5.6 11 V5.6 M5.6 6.8 Q6.2 5.4 7.4 5.4 Q9 5.4 9 7 V11 M9 7 Q9 5.4 10.6 5.4 Q12.2 5.4 12.2 7 V11" fill="none" stroke="#E55B5B" stroke-width="1.15"/><path d="M5 8.4 L8.7 12.1 L5 15.8 L1.3 12.1 Z" fill="#3C3E42" stroke="#CED0D6" stroke-width="1.15"/></svg>
<div class="t" style="left:359.5px;top:716.1px;font-size:13.8px;color:#A8ADBD">main</div>
<div class="t" style="left:1099.7px;top:716.1px;font-size:13.8px;color:#A8ADBD">24:51</div>
<div class="t" style="left:1149.8px;top:716.1px;font-size:13.1px;color:#A8ADBD">CRLF</div>
<div class="t" style="left:1197.6px;top:716.1px;font-size:13.8px;color:#A8ADBD">UTF-8</div>
<div class="t" style="left:1257.7px;top:716.1px;font-size:13.8px;color:#A8ADBD">4 spaces</div>
<svg style="left:1331px;top:717.0px" width="15" height="13"><rect x="0.6" y="5.5" width="10" height="7" rx="1.3" fill="none" stroke="#A8ADBD" stroke-width="1.2"/><path d="M7.5 5.5 V3.5 Q7.5 0.8 10.5 0.8 Q13.5 0.8 13.5 3.5 V4.5" fill="none" stroke="#A8ADBD" stroke-width="1.2"/></svg>
<!-- TASKBAR -->
<div class="a" style="left:293px;top:738px;width:36px;height:30px;background:#144A41"></div>
<svg style="left:7px;top:744.5px" width="17" height="17"><path d="M0 2.3 L6.3 1.4 V7.6 H0 Z M7.2 1.3 L16.2 0 V7.6 H7.2 Z M0 8.5 H6.3 V14.7 L0 13.8 Z M7.2 8.5 H16.2 V16.2 L7.2 14.9 Z" fill="#FFFFFF"/></svg>
<svg style="left:43px;top:745px" width="17" height="17"><circle cx="10" cy="6.5" r="5.5" fill="none" stroke="#fff" stroke-width="1.3"/><path d="M6 10.5 L0.8 15.8" stroke="#fff" stroke-width="1.5"/></svg>
<svg style="left:78px;top:744px" width="18" height="18"><path d="M1.6 0.8 V3.2 H11.6 V0.8 M1.6 5.4 H11.6 V13.6 H1.6 Z M1.6 16.8 V14.8 H11.6 V16.8 M15.4 0.8 V16.8" fill="none" stroke="#fff" stroke-width="1.1"/><rect x="14" y="5.6" width="2.8" height="2.8" fill="#fff"/></svg>
<svg style="left:118px;top:745px" width="17" height="16"><path d="M0 1.5 H6 L8 3.5 H17 V15 H0 Z" fill="#E8A82A"/><path d="M0 5 H17 V15 H0 Z" fill="#F9D25F"/><rect x="5" y="9" width="7" height="6" fill="#2E8BD8"/><rect x="7" y="11" width="3" height="4" fill="#F9D25F"/></svg>
<svg style="left:157px;top:745px" width="12" height="16"><path d="M5.5 0.5 L9.5 3.5 L10.8 10.5 L8 15.5 L2.5 14 L0.5 10 L2 5.5 Z" fill="#7B52D9"/><path d="M5.5 0.5 L9.5 3.5 L9 8 L5.5 10 L3 7.5 Z" fill="#B79BF5"/><path d="M0.5 10 L3 7.5 L5.5 10 L2.5 14 Z" fill="#8E6AE8"/></svg>
<svg style="left:191px;top:744px" width="18" height="18"><defs><radialGradient id="ffg" cx="0.45" cy="0.35" r="0.75"><stop offset="0" stop-color="#7FE6FF"/><stop offset="0.55" stop-color="#2AA8F5"/><stop offset="1" stop-color="#1670E0"/></radialGradient></defs><path d="M2 6 Q2.5 4 3.4 3.2 L4.4 4.4 L5.6 3.6 L7 5 Q8 4.2 9 4.6 Q10 2.2 11.5 0.8 Q12.6 3 14 4.2 Q17 6.5 17 10 Q17 16.8 9 17 Q1 17 1 10 Q1 7.5 2 6 Z" fill="url(#ffg)"/><ellipse cx="9.3" cy="10.3" rx="3" ry="2.4" fill="#3B24B0"/><path d="M3 7.8 Q6 9.5 8 8.5" fill="none" stroke="#B8F2FF" stroke-width="1" opacity="0.8"/></svg>
<svg style="left:229px;top:745px" width="17" height="17"><path d="M8.5 1 A7.3 7.3 0 1 1 4.2 14.6 L1 15.8 L2.1 12.6 A7.3 7.3 0 0 1 8.5 1 Z" fill="none" stroke="#2FD366" stroke-width="1.8"/><path d="M5.5 5.3 Q6.3 4.5 7 5.5 L7.6 7 Q7.2 8 6.9 8.2 Q8 10.3 10 11 L10.8 10.2 L12.2 11 Q12.3 12 11 12.4 Q8 12.4 6 10 Q4.5 7.5 5.5 5.3 Z" fill="#2FD366"/></svg>
<svg style="left:267px;top:746px" width="14" height="14"><rect x="0" y="0" width="14" height="14" fill="#C9C9C9"/><rect x="1" y="1" width="3" height="3" fill="#1A1A1A"/><rect x="1" y="5" width="3" height="4" fill="#D83030"/><rect x="1" y="10" width="3" height="3" fill="#1A1A1A"/><rect x="5" y="1" width="8" height="7" fill="#F2C230"/><rect x="5" y="9" width="7" height="4" fill="#5A9AE8"/></svg>
<div class="a" style="left:303px;top:745px;width:16px;height:16px;background:#000;border:1.2px solid #3A8DFF"></div>
<div class="t" style="left:305.5px;top:747.3px;font-size:7.5px;font-weight:bold;color:#fff;font-family:'Liberation Serif'">IJ</div>
<div class="a" style="left:306px;top:757px;width:5px;height:1.3px;background:#fff"></div>
<svg style="left:340px;top:744.8px" width="16" height="16"><defs><radialGradient id="gg" cx="0.5" cy="0.45" r="0.6"><stop offset="0" stop-color="#2F55B8"/><stop offset="0.8" stop-color="#1E3A8F"/><stop offset="1" stop-color="#6F86D8"/></radialGradient></defs><circle cx="8" cy="7.9" r="7.8" fill="url(#gg)"/><path d="M2.5 3.5 Q6 0.3 10.5 0.8 Q14.5 2 15.2 6 Q14 5.5 13.8 7.5 Q13 9 12.5 9.5 L11.3 12 L10.3 9 Q8.5 8.5 7.5 7 Q6.5 5 4 5.2 Q3 4.5 2.5 3.5 Z M0.5 7 Q2.5 7 3 9 Q2.5 10.5 0.8 10.5 Z" fill="#E6ECFA"/><ellipse cx="8" cy="14.2" rx="4.5" ry="1.4" fill="#8B9BE0" opacity="0.7"/></svg>
<svg style="left:378px;top:746px" width="15" height="15"><defs><linearGradient id="rg" x1="0" y1="1" x2="1" y2="0"><stop offset="0" stop-color="#3FD06A"/><stop offset="0.4" stop-color="#1E9FE8"/><stop offset="0.7" stop-color="#2B5BF0"/><stop offset="1" stop-color="#B040F0"/></linearGradient></defs><circle cx="7" cy="6.9" r="5.1" fill="none" stroke="url(#rg)" stroke-width="3.2"/><circle cx="7" cy="6.9" r="3.3" fill="#0C2420"/><circle cx="7.2" cy="6.7" r="2.2" fill="#3F9FF5"/></svg>
<div class="a" style="left:112px;top:766px;width:19px;height:2px;background:#9ADBCF"></div>
<div class="a" style="left:131px;top:766px;width:9px;height:2px;background:#6C9E96"></div>
<div class="a" style="left:149px;top:766px;width:28px;height:2px;background:#9ADBCF"></div>
<div class="a" style="left:186px;top:766px;width:19px;height:2px;background:#9ADBCF"></div>
<div class="a" style="left:205px;top:766px;width:9px;height:2px;background:#6C9E96"></div>
<div class="a" style="left:223px;top:766px;width:28px;height:2px;background:#9ADBCF"></div>
<div class="a" style="left:260px;top:766px;width:28px;height:2px;background:#9ADBCF"></div>
<div class="a" style="left:293px;top:766px;width:36px;height:2px;background:#9ADBCF"></div>
<div class="a" style="left:334px;top:766px;width:27px;height:2px;background:#9ADBCF"></div>
<div class="a" style="left:371px;top:766px;width:27px;height:2px;background:#9ADBCF"></div>
<div class="t" style="left:1138px;top:745.5px;font-size:11.5px;color:#fff">ES</div>
<svg style="left:1167px;top:747px" width="13" height="8"><path d="M0.8 7 L6.5 1.2 L12.2 7" fill="none" stroke="#fff" stroke-width="1.2"/></svg>
<svg style="left:1189px;top:745px" width="16" height="15"><path d="M0.6 5 H3.5 L7.5 1 V14 L3.5 10 H0.6 Z" fill="none" stroke="#fff" stroke-width="1.1"/><path d="M10 5 L14.5 9.5 M14.5 5 L10 9.5" stroke="#fff" stroke-width="1.1"/></svg>
<svg style="left:1215px;top:743px" width="20" height="20"><path d="M8.2 16.8 L13.6 4 Q14.3 2.6 15.2 3.1 Q16 3.6 15.5 5 L10.2 17.6 L8.2 18.5 Z" fill="none" stroke="#fff" stroke-width="1.2" stroke-linejoin="round"/><path d="M7.3 11.6 Q3.3 11.4 3.2 14.6 Q3.2 17.6 6.8 17.6 M15.6 8.6 Q18.2 8.7 18.2 10.6 Q18.2 12.4 15.6 12.4" fill="none" stroke="#fff" stroke-width="1.3"/></svg>
<div class="t" style="left:1248px;top:746px;font-size:11.6px;color:#fff">12:02 p. m.</div>
<svg style="left:1322px;top:745px" width="17" height="16"><path d="M0.5 0.5 H16.5 V11.5 H10 L7 15 V11.5 H0.5 Z" fill="#fff"/><path d="M3.5 3.5 H13.5 M3.5 6 H13.5 M3.5 8.5 H10" stroke="#0E1F1D" stroke-width="1.1"/></svg>
<div class="a" style="left:1358px;top:738px;width:1px;height:30px;background:#3C4B49"></div>
<!-- RIGHT STRIPE ICONS -->
<svg style="left:1330px;top:48px" width="26" height="26"><path d="M14.8 4.6 Q8.2 4.4 8.1 10.2 V13.6 L5.6 17.6 Q5.2 18.4 6.2 18.4 H20.2 Q21.2 18.4 20.8 17.6 L18.3 13.6 V11.2" fill="none" stroke="#CED0D6" stroke-width="1.4" stroke-linejoin="round"/><path d="M10.8 20 H15.2 Q14.6 21.8 13 21.8 Q11.4 21.8 10.8 20 Z" fill="#CED0D6"/><circle cx="19.5" cy="6.6" r="3.7" fill="#E55B5B"/></svg>
<svg style="left:1330px;top:88px" width="26" height="26"><path d="M6.2 6.3 C9 5.3, 15.5 5, 18.5 7.5 C21.5 10, 21 14.5, 18 16.5 C15.5 18, 11.5 17.5, 10 15 C9 13, 10.5 11, 13 11.2 M19.8 19.3 C17 20.3, 10.5 20.6, 7.5 18.1 C4.5 15.6, 5 11.1, 8 9.1 C10.5 7.6, 14.5 8.1, 16 10.6 C17 12.6, 15.5 14.6, 13 14.4" fill="none" stroke="#CED0D6" stroke-width="1.5" stroke-linecap="round"/></svg>
<!-- BOTTOM_END -->
</body></html>
